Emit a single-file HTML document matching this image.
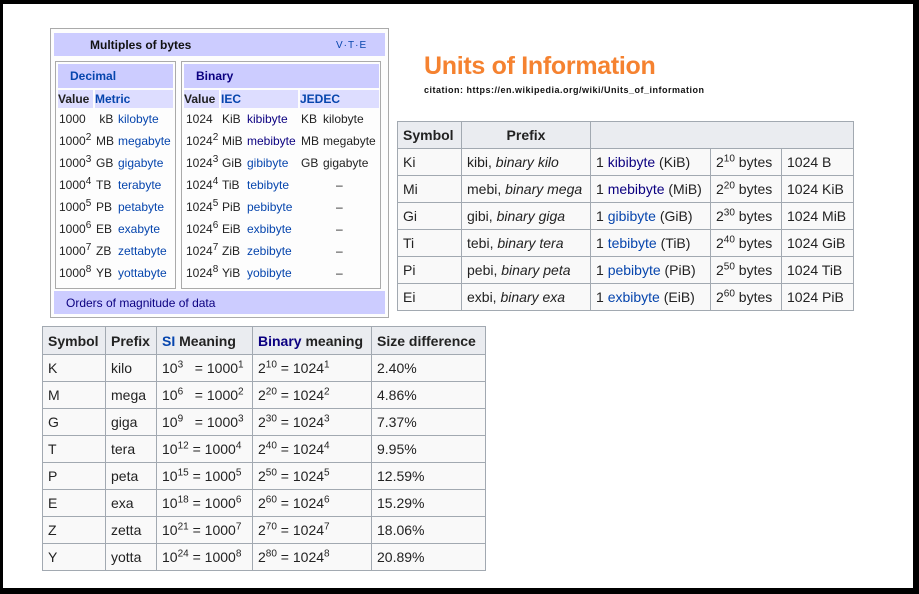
<!DOCTYPE html>
<html><head><meta charset="utf-8"><style>
*{margin:0;padding:0;box-sizing:border-box}
body{width:919px;height:594px;background:#000;position:relative;overflow:hidden;font-family:"Liberation Sans",Arial,sans-serif;color:#222}
#w{position:absolute;left:3px;top:4px;width:910px;height:584px;background:#fff}
.a{position:absolute;white-space:nowrap}
.l{color:#0645ad}.v{color:#0b0080}
sup{font-size:10px;vertical-align:super;line-height:0}
table{position:absolute;border-collapse:collapse;table-layout:fixed;font-size:14px}
td,th{border:1px solid #a2a9b1;background:#f9f9f9;padding:0 5px;white-space:nowrap;text-align:left;height:27px}
th{background:#eaecf0;font-weight:bold}
.nb{font-size:12px}
</style></head><body><div id="w"></div>

<!-- navbox -->
<div class="a" style="left:50px;top:28px;width:339px;height:290px;border:1px solid #aaa;background:#fdfdfd"></div>
<div class="a" style="left:54px;top:33px;width:331px;height:23px;background:#ccf"></div>
<div class="a nb" style="left:90px;top:38px;font-weight:bold;color:#111">Multiples of bytes</div>
<div class="a" style="left:336px;top:40px;font-size:10px;color:#0645ad;letter-spacing:1px">V·T·E</div>
<div class="a" style="left:55px;top:61px;width:121px;height:228px;border:1px solid #aaa"></div>
<div class="a" style="left:181px;top:61px;width:200px;height:228px;border:1px solid #aaa"></div>
<div class="a" style="left:58px;top:64px;width:115px;height:24px;background:#ccf"></div>
<div class="a" style="left:184px;top:64px;width:195px;height:24px;background:#ccf"></div>
<div class="a nb" style="left:70px;top:69px;font-weight:bold;color:#0645ad">Decimal</div>
<div class="a nb" style="left:196px;top:69px;font-weight:bold;color:#0b0080">Binary</div>
<div class="a" style="left:58px;top:90px;width:35px;height:18px;background:#ddf"></div>
<div class="a" style="left:95px;top:90px;width:78px;height:18px;background:#ddf"></div>
<div class="a" style="left:184px;top:90px;width:35px;height:18px;background:#ddf"></div>
<div class="a" style="left:221px;top:90px;width:77px;height:18px;background:#ddf"></div>
<div class="a" style="left:300px;top:90px;width:79px;height:18px;background:#ddf"></div>
<div class="a nb" style="left:58px;top:92px;font-weight:bold">Value</div>
<div class="a nb l" style="left:95px;top:92px;font-weight:bold">Metric</div>
<div class="a nb" style="left:184px;top:92px;font-weight:bold">Value</div>
<div class="a nb l" style="left:221px;top:92px;font-weight:bold">IEC</div>
<div class="a nb l" style="left:300px;top:92px;font-weight:bold">JEDEC</div>
<div class="a" style="left:54px;top:291px;width:331px;height:23px;background:#ccf"></div>
<div class="a nb" style="left:66px;top:296px;color:#0b0080">Orders of magnitude of data</div>

<div class="a nb" style="left:59px;top:108px;line-height:22px">
1000<br>1000<sup>2</sup><br>1000<sup>3</sup><br>1000<sup>4</sup><br>1000<sup>5</sup><br>1000<sup>6</sup><br>1000<sup>7</sup><br>1000<sup>8</sup></div>
<div class="a nb" style="left:96px;top:108px;line-height:22px">&nbsp;kB<br>MB<br>GB<br>TB<br>PB<br>EB<br>ZB<br>YB</div>
<div class="a nb l" style="left:118px;top:108px;line-height:22px">kilobyte<br>megabyte<br>gigabyte<br>terabyte<br>petabyte<br>exabyte<br>zettabyte<br>yottabyte</div>
<div class="a nb" style="left:186px;top:108px;line-height:22px">1024<br>1024<sup>2</sup><br>1024<sup>3</sup><br>1024<sup>4</sup><br>1024<sup>5</sup><br>1024<sup>6</sup><br>1024<sup>7</sup><br>1024<sup>8</sup></div>
<div class="a nb" style="left:222px;top:108px;line-height:22px">KiB<br>MiB<br>GiB<br>TiB<br>PiB<br>EiB<br>ZiB<br>YiB</div>
<div class="a nb" style="left:247px;top:108px;line-height:22px"><span class="v">kibibyte</span><br><span class="v">mebibyte</span><br><span class="l">gibibyte</span><br><span class="l">tebibyte</span><br><span class="l">pebibyte</span><br><span class="l">exbibyte</span><br><span class="l">zebibyte</span><br><span class="l">yobibyte</span></div>
<div class="a nb" style="left:301px;top:108px;line-height:22px">KB<br>MB<br>GB</div>
<div class="a nb" style="left:323px;top:108px;line-height:22px">kilobyte<br>megabyte<br>gigabyte</div>
<div class="a nb" style="left:336px;top:174px;line-height:22px">–<br>–<br>–<br>–<br>–</div>

<!-- title -->
<div class="a" style="left:424px;top:52px;font-size:25px;font-weight:bold;color:#f58230;font-family:'Liberation Sans',sans-serif;letter-spacing:-0.3px">Units of Information</div>
<div class="a" style="left:424px;top:85px;font-size:9px;font-weight:bold;color:#111;letter-spacing:0.5px">citation: https://en.wikipedia.org/wiki/Units_of_information</div>

<!-- right table -->
<table style="left:397px;top:121px;width:456px">
<colgroup><col style="width:64px"><col style="width:129px"><col style="width:120px"><col style="width:71px"><col style="width:72px"></colgroup>
<tr><th>Symbol</th><th style="text-align:center">Prefix</th><th colspan="3"></th></tr>
<tr><td>Ki</td><td>kibi, <i>binary kilo</i></td><td>1 <span class="v">kibibyte</span> (KiB)</td><td>2<sup>10</sup> bytes</td><td>1024 B</td></tr>
<tr><td>Mi</td><td>mebi, <i>binary mega</i></td><td>1 <span class="v">mebibyte</span> (MiB)</td><td>2<sup>20</sup> bytes</td><td>1024 KiB</td></tr>
<tr><td>Gi</td><td>gibi, <i>binary giga</i></td><td>1 <span class="l">gibibyte</span> (GiB)</td><td>2<sup>30</sup> bytes</td><td>1024 MiB</td></tr>
<tr><td>Ti</td><td>tebi, <i>binary tera</i></td><td>1 <span class="l">tebibyte</span> (TiB)</td><td>2<sup>40</sup> bytes</td><td>1024 GiB</td></tr>
<tr><td>Pi</td><td>pebi, <i>binary peta</i></td><td>1 <span class="l">pebibyte</span> (PiB)</td><td>2<sup>50</sup> bytes</td><td>1024 TiB</td></tr>
<tr><td>Ei</td><td>exbi, <i>binary exa</i></td><td>1 <span class="l">exbibyte</span> (EiB)</td><td>2<sup>60</sup> bytes</td><td>1024 PiB</td></tr>
</table>

<!-- bottom table -->
<table style="left:42px;top:326px;width:443px">
<colgroup><col style="width:63px"><col style="width:51px"><col style="width:96px"><col style="width:119px"><col style="width:114px"></colgroup>
<tr><th style="height:28px">Symbol</th><th>Prefix</th><th><span class="l">SI</span> Meaning</th><th><span class="v">Binary</span> meaning</th><th>Size difference</th></tr>
<tr><td>K</td><td>kilo</td><td>10<sup>3</sup> &nbsp; = 1000<sup>1</sup></td><td>2<sup>10</sup> = 1024<sup>1</sup></td><td>2.40%</td></tr>
<tr><td>M</td><td>mega</td><td>10<sup>6</sup> &nbsp; = 1000<sup>2</sup></td><td>2<sup>20</sup> = 1024<sup>2</sup></td><td>4.86%</td></tr>
<tr><td>G</td><td>giga</td><td>10<sup>9</sup> &nbsp; = 1000<sup>3</sup></td><td>2<sup>30</sup> = 1024<sup>3</sup></td><td>7.37%</td></tr>
<tr><td>T</td><td>tera</td><td>10<sup>12</sup> = 1000<sup>4</sup></td><td>2<sup>40</sup> = 1024<sup>4</sup></td><td>9.95%</td></tr>
<tr><td>P</td><td>peta</td><td>10<sup>15</sup> = 1000<sup>5</sup></td><td>2<sup>50</sup> = 1024<sup>5</sup></td><td>12.59%</td></tr>
<tr><td>E</td><td>exa</td><td>10<sup>18</sup> = 1000<sup>6</sup></td><td>2<sup>60</sup> = 1024<sup>6</sup></td><td>15.29%</td></tr>
<tr><td>Z</td><td>zetta</td><td>10<sup>21</sup> = 1000<sup>7</sup></td><td>2<sup>70</sup> = 1024<sup>7</sup></td><td>18.06%</td></tr>
<tr><td>Y</td><td>yotta</td><td>10<sup>24</sup> = 1000<sup>8</sup></td><td>2<sup>80</sup> = 1024<sup>8</sup></td><td>20.89%</td></tr>
</table>
</body></html>
